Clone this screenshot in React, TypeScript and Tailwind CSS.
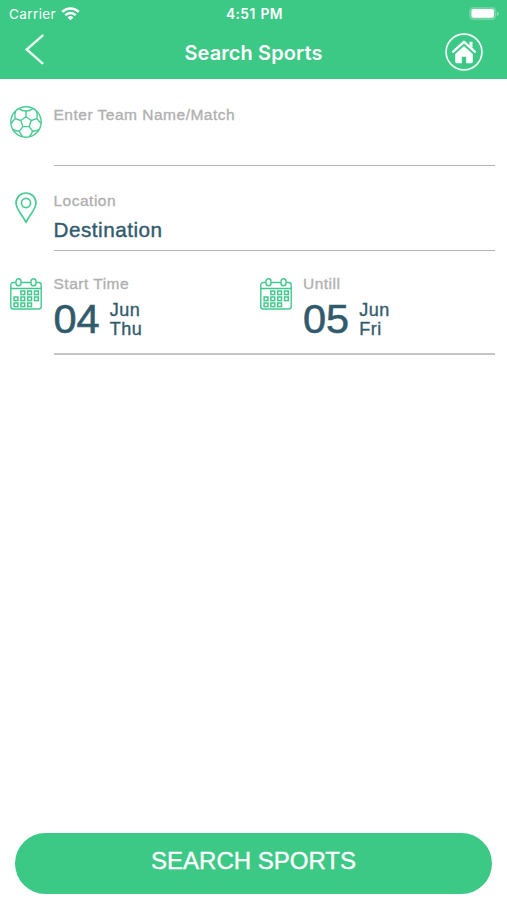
import type { ReactNode } from "react";

const labelClass =
  "block text-[15.5px] leading-[18px] tracking-[0.5px] text-[#b0b0b0] [-webkit-text-stroke:0.35px_#b0b0b0]";

const dates = [
  { label: "Start Time", day: "04", month: "Jun", weekday: "Thu" },
  { label: "Untill", day: "05", month: "Jun", weekday: "Fri" },
];

// column, row of every day cell in the calendar icon
const calendarCells = [
  [1, 0], [2, 0], [3, 0],
  [0, 1], [1, 1], [2, 1], [3, 1],
  [0, 2], [1, 2], [2, 2],
];

function WifiIcon() {
  return (
    <svg className="ml-[5px] h-[14px] w-[19px]" viewBox="0 0 19 14" fill="none" stroke="#fff" strokeWidth="2.6">
      <path d="M1.2 4.9a11.8 11.8 0 0 1 16.6 0" />
      <path d="M4.3 8.2a7.4 7.4 0 0 1 10.4 0" />
      <path d="M9.5 13.3 6.6 10.4a4.1 4.1 0 0 1 5.8 0Z" fill="#fff" stroke="none" />
    </svg>
  );
}

function BatteryIcon() {
  return (
    <svg className="h-[14px] w-[31px]" viewBox="0 0 31 14">
      <rect x="0.5" y="0.2" width="26.5" height="12.5" rx="4" fill="#6bd49f" stroke="#7cdaab" strokeWidth="0.6" />
      <rect x="2.5" y="2" width="22.5" height="8.8" rx="2.2" fill="#fff" />
      <path d="M28.2 4.4v4.6q1.7-.8 1.7-2.3t-1.7-2.3Z" fill="#8fe0b6" />
    </svg>
  );
}

function HomeIcon() {
  return (
    <svg className="h-[38px] w-[38px]" viewBox="0 0 38 38">
      <circle cx="19" cy="19" r="17.9" fill="none" stroke="#f0fff6" strokeWidth="1.7" />
      <path d="M8.2 18.6 19 8.8 29.8 18.6" fill="none" stroke="#fff" strokeWidth="2.4" strokeLinecap="round" strokeLinejoin="round" />
      <path d="M24.5 8.7h3v6l-3-2.8Z" fill="#fff" />
      <path d="M19 13 27.8 21v7.8q0 1.4-1.4 1.4H21.2v-6.4h-4.4v6.4h-5.2q-1.4 0-1.4-1.4V21Z" fill="#fff" />
    </svg>
  );
}

function BallIcon() {
  return (
    <svg className="h-8 w-8" viewBox="0 0 32 32" fill="none" stroke="#49cb93" strokeWidth="1.4" strokeLinejoin="round">
      <circle cx="16" cy="16" r="15.2" />
      <path d="m16 10.7 5.2 3.8-2 6.1h-6.4l-2-6.1Z" />
      <path d="M16 10.7V5M21.2 14.5l5.6-1.8M19.2 20.6l3.4 4.6M12.8 20.6l-3.4 4.6M10.8 14.5l-5.6-1.8" />
      <path d="M9.2 2.6Q12 5 16 5t6.800-2.400M5.600 5.100Q4.200 9 5.200 12.700 3.200 14.500.9 17.500M26.400 5.100q1.400 3.900.4 7.600 2 1.800 4.300 4.800" />
      <path d="M2.8 23.3q3.2 2 6.6 1.9 1.2 3.3 3.6 5.6M29.2 23.3q-3.2 2-6.6 1.9-1.2 3.3-3.6 5.6" />
    </svg>
  );
}

function PinIcon() {
  return (
    <svg className="h-[32px] w-[22px]" viewBox="0 0 22 32" fill="none" stroke="#49cb93" strokeWidth="1.7" strokeLinejoin="round">
      <path d="M11 30.5C9.4 25.3 1 17.8 1 11a10 10 0 0 1 20 0C21 17.8 12.6 25.3 11 30.5Z" />
      <circle cx="11" cy="11" r="4.6" />
    </svg>
  );
}

function CalendarIcon() {
  return (
    <svg className="h-8 w-8" viewBox="0 0 32 32" fill="none" stroke="#42c88e" strokeWidth="1.4">
      <path d="M5.8 4.5H3.2Q.8 4.5.8 7v21.5q0 2.5 2.4 2.5h25.6q2.4 0 2.4-2.500V7q0-2.500-2.400-2.500h-2.600M11.200 4.500h9.600M.8 10.500h30.400" />
      <rect x="6" y="0.8" width="5" height="7" rx="2.5" />
      <rect x="21" y="0.8" width="5" height="7" rx="2.5" />
      {calendarCells.map(([col, row]) => (
        <rect key={`${col}-${row}`} x={4.1 + col * 6.8} y={13 + row * 6} width="3.8" height="3.6" strokeWidth="1.5" />
      ))}
    </svg>
  );
}

function Field({ icon, children }: { icon: ReactNode; children: ReactNode }) {
  return (
    <div className="flex pr-3">
      <div className="flex w-[53.5px] shrink-0 pl-[10px]">{icon}</div>
      <div className="flex-1 border-b border-[#b4b4b4]">{children}</div>
    </div>
  );
}

export default function App() {
  return (
    <main className="flex h-[900px] w-[507px] flex-col bg-white font-['Liberation_Sans',sans-serif] text-[#315b6d]">
      <header className="h-[79px] bg-[#3cc885] font-['Inter',sans-serif] text-white">
        {/* Status bar */}
        <div className="grid h-7 grid-cols-3 items-center pl-[9px] pr-[7px]">
          <div className="flex items-center text-[13.5px] tracking-[0.4px]">
            <span>Carrier</span>
            <WifiIcon />
          </div>
          <span className="text-center text-[13.8px] font-semibold tracking-[0.4px] [word-spacing:1px]">4:51 PM</span>
          <div className="flex justify-end">
            <BatteryIcon />
          </div>
        </div>

        {/* Nav bar */}
        <div className="grid h-12 grid-cols-[100px_1fr_100px] items-center">
          <button aria-label="Back" className="pl-6">
            <svg className="-mt-[6px] h-[32px] w-5" viewBox="0 0 20 32" fill="none" stroke="#e8fbf1" strokeWidth="2.4" strokeLinecap="round">
              <path d="M18.5 2.6 2.7 16.5 18.5 30.3" />
            </svg>
          </button>
          <h1 className="pt-px text-center text-[20px] font-semibold tracking-[0.1px]">Search Sports</h1>
          <button aria-label="Home" className="flex justify-end pr-6">
            <HomeIcon />
          </button>
        </div>
      </header>

      <section className="flex flex-1 flex-col">
        <div className="h-[87px] pt-[27px]">
          <Field icon={<div className="h-[60px]"><BallIcon /></div>}>
            <label className={labelClass}>Enter Team Name/Match</label>
          </Field>
        </div>

        <div className="h-[85px] pt-[26px]">
          <Field icon={<div className="h-[59px] pl-[5px]"><PinIcon /></div>}>
            <label className={labelClass}>Location</label>
            <p className="mt-2 text-[20.7px] leading-6 tracking-[0.5px] [-webkit-text-stroke:0.4px_#315b6d]">Destination</p>
          </Field>
        </div>

        <div className="flex pr-3 pt-[24px]">
          {dates.map((date) => (
            <div key={date.label} className="flex h-[78px] w-[249.5px] shrink-0 last:w-[245.5px]">
              <div className="w-[53.5px] shrink-0 pl-[10px] pt-[3px]">
                <CalendarIcon />
              </div>
              <div>
                <span className={labelClass}>{date.label}</span>
                <div className="mt-[3px] flex items-center gap-[10px]">
                  <span className="text-[41.5px] leading-[46px] [-webkit-text-stroke:0.6px_#315b6d]">{date.day}</span>
                  <div className="pt-px text-[18px] leading-[18.5px] tracking-[0.5px] [-webkit-text-stroke:0.35px_#315b6d]">
                    <p>{date.month}</p>
                    <p>{date.weekday}</p>
                  </div>
                </div>
              </div>
            </div>
          ))}
        </div>
        <div className="ml-[53.5px] mr-3 h-[2px] bg-[#c4c4c4]" />
      </section>

      <footer className="px-[15px] pb-[6px]">
        <button className="h-[61px] w-full rounded-full bg-[#3cc885] pb-[6px] text-[24px] text-white [-webkit-text-stroke:0.4px_#fff]">
          SEARCH SPORTS
        </button>
      </footer>
    </main>
  );
}
